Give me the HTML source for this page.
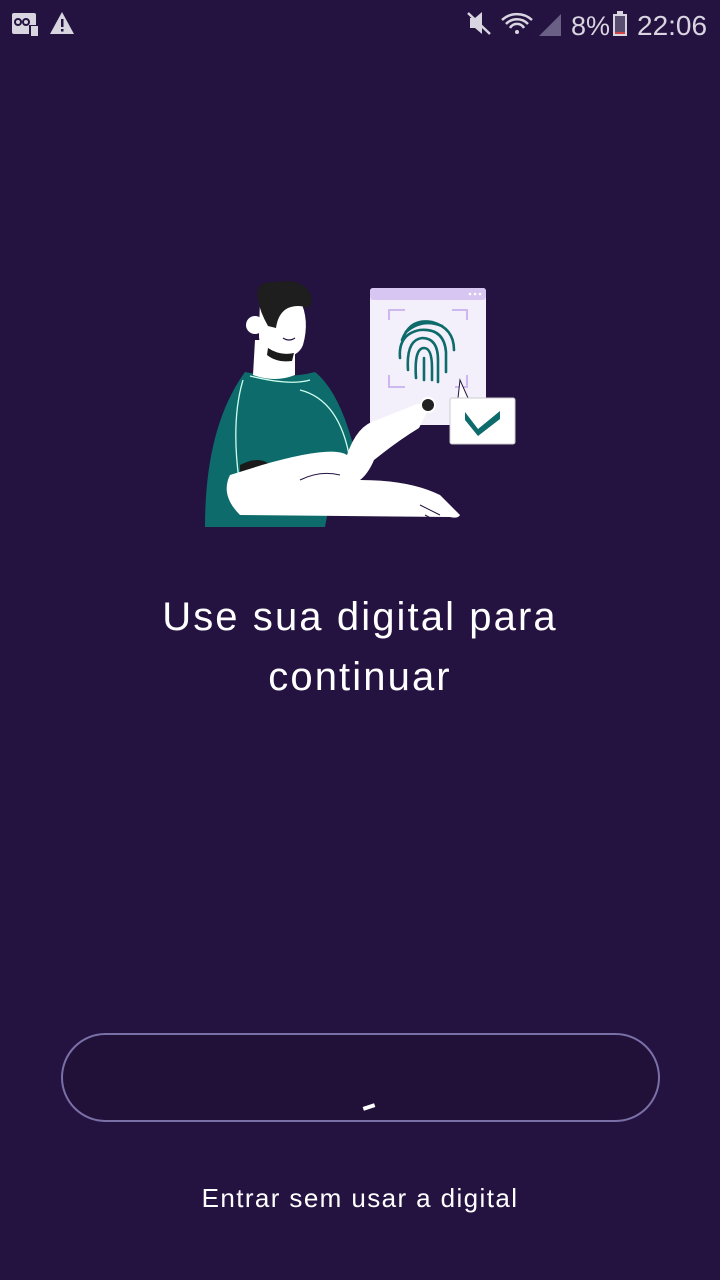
<!DOCTYPE html>
<html><head><meta charset="utf-8"><style>
html,body{margin:0;padding:0;width:720px;height:1280px;background:#241240;overflow:hidden;font-family:"Liberation Sans",sans-serif;color:#fff}
.sb{position:absolute;top:0;left:0;width:720px;height:50px;color:#d8d4e0}
.title{position:absolute;top:587px;left:0;width:720px;text-align:center;font-size:40px;line-height:60px;letter-spacing:2.1px}
.btn{position:absolute;left:61px;top:1033px;width:595px;height:85px;border:2px solid #7a70a8;border-radius:45px;background:#211038}
.dash{position:absolute;left:363px;top:1105px;width:12px;height:4px;background:#fff;transform:rotate(-18deg)}
.link{position:absolute;top:1183px;left:0;width:720px;text-align:center;font-size:26px;letter-spacing:1.4px}
</style></head><body>
<div class="sb">
<svg width="720" height="50">
<rect x="12" y="13" width="24" height="21" rx="2" fill="#d8d4e0"/>
<circle cx="18" cy="22" r="3" fill="none" stroke="#241240" stroke-width="2"/><circle cx="26" cy="22" r="3" fill="none" stroke="#241240" stroke-width="2"/>
<rect x="29" y="25" width="9" height="11" fill="#241240"/><rect x="31" y="26" width="7" height="10" fill="#d8d4e0"/>
<path d="M62 12 L74 34 L50 34 Z" fill="#d8d4e0"/><rect x="61" y="19" width="2.5" height="8" fill="#241240"/><rect x="61" y="29" width="2.5" height="2.5" fill="#241240"/>
<path d="M470 18 h5 l7 -6 v22 l-7 -6 h-5z" fill="#d8d4e0"/><line x1="468" y1="13" x2="490" y2="34" stroke="#d8d4e0" stroke-width="2.5"/>
<path d="M502 20 a22 22 0 0 1 30 0 M506 24 a15 15 0 0 1 22 0 M510 28 a8 8 0 0 1 14 0" stroke="#d8d4e0" stroke-width="2.5" fill="none"/>
<circle cx="517" cy="32" r="2" fill="#d8d4e0"/>
<path d="M539 36 L561 14 L561 36 Z" fill="#6a5f85"/>
<text x="571" y="35" font-size="27" fill="#d8d4e0" font-family="Liberation Sans Narrow,Liberation Sans,sans-serif">8%</text>
<rect x="613" y="14" width="14" height="22" fill="#d8d4e0"/><rect x="617" y="11" width="6" height="3" fill="#d8d4e0"/><rect x="615" y="16" width="10" height="17" fill="#5a4e70"/><rect x="615" y="32" width="10" height="2" fill="#c44"/>
<text x="637" y="35" font-size="28" fill="#d8d4e0" font-family="Liberation Sans Narrow,Liberation Sans,sans-serif">22:06</text>
</svg></div>

<svg style="position:absolute;left:0;top:0" width="720" height="560">
<rect x="370" y="288" width="116" height="137" rx="3" fill="#f4f0fb"/>
<rect x="370" y="288" width="116" height="12" rx="3" fill="#d8c6f2"/>
<g fill="#fff"><circle cx="470" cy="294" r="1.3"/><circle cx="475" cy="294" r="1.3"/><circle cx="480" cy="294" r="1.3"/></g>
<g stroke="#cdb8ef" stroke-width="2" fill="none">
<path d="M389 320 v-10 h16"/><path d="M452 310 h15 v10"/><path d="M389 375 v12 h16"/><path d="M467 375 v12 h-12"/>
</g>
<g stroke="#0e6b6b" stroke-width="2.6" fill="none" stroke-linecap="round">
<path d="M402 340 q8 -22 30 -18 q22 6 22 28"/>
<path d="M400 358 q-2 -24 20 -28 q24 -2 26 22 v20"/>
<path d="M408 370 q-2 -30 14 -32 q16 0 16 22 v22"/>
<path d="M416 378 q-2 -30 8 -30 q8 0 8 20 v12"/>
<path d="M424 380 v-22"/>
<path d="M406 332 q16 -14 36 -6"/>
</g>
<path d="M460 380 l8 18 h-10z" fill="#fff" stroke="#241240" stroke-width="1"/>
<rect x="450" y="398" width="65" height="46" rx="2" fill="#fff" stroke="#ccc"/>
<path d="M465 412 l13 17 l22 -18 l0 8 l-22 17 l-13 -16z" fill="#0e6b6b"/>
<path d="M245 372 q40 8 70 0 q25 20 40 80 l-20 20 l-10 55 h-120 q0 -100 40 -155z" fill="#0e6b6b"/>
<path d="M250 376 q40 10 60 4 M243 380 q-12 40 -4 100 M300 390 q40 10 50 70" stroke="#cfe" stroke-width="1.3" fill="none"/>
<path d="M240 465 q20 -10 30 0 l-10 20 h-20z" fill="#1a1a1a"/>
<path d="M262 465 q70 -20 85 -10 q10 -30 30 -35 l40 -16 q10 0 10 8 l-8 16 q-20 12 -45 32 q-6 14 -14 20 q50 0 80 15 l20 20 q-2 4 -10 2 l-210 -2 q-20 -20 -10 -40z" fill="#fff"/>
<path d="M300 480 q20 -10 40 -5 M420 505 l20 10 M425 515 l15 8" stroke="#241240" stroke-width="1" fill="none"/>
<circle cx="428" cy="405" r="7" fill="#222" stroke="#fff" stroke-width="2"/>
<path d="M255 340 h40 v35 q-20 8 -42 0z" fill="#fff"/>
<path d="M260 300 q20 -12 40 0 q10 20 3 45 q-6 15 -30 12 q-15 -5 -14 -25z" fill="#fff"/>
<circle cx="255" cy="325" r="9" fill="#fff"/>
<path d="M268 348 q12 8 26 5 l-2 8 q-15 2 -25 -6z" fill="#1a1a1a"/>
<path d="M258 300 q-5 -20 20 -18 q20 -4 30 8 q8 10 0 18 q-10 -4 -20 0 q-10 5 -12 20 l-8 -2 q-8 -14 -10 -26z" fill="#1e1e1e"/>
<path d="M283 338 q6 4 12 0" stroke="#241240" stroke-width="1.3" fill="none"/>
</svg>

<div class="title">Use sua digital para<br>continuar</div>
<div class="btn"></div>
<div class="dash"></div>
<div class="link">Entrar sem usar a digital</div>
</body></html>
